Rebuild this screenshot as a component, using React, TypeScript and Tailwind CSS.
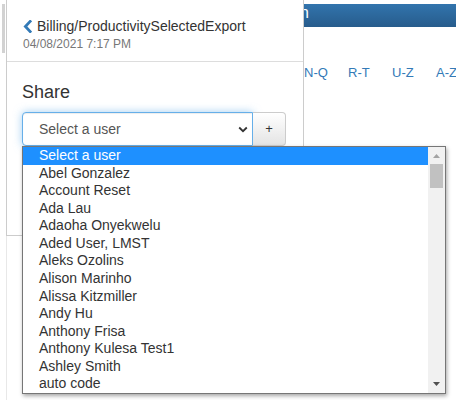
import React from "react";

const users = [
  "Select a user",
  "Abel Gonzalez",
  "Account Reset",
  "Ada Lau",
  "Adaoha Onyekwelu",
  "Aded User, LMST",
  "Aleks Ozolins",
  "Alison Marinho",
  "Alissa Kitzmiller",
  "Andy Hu",
  "Anthony Frisa",
  "Anthony Kulesa Test1",
  "Ashley Smith",
  "auto code",
];

const letters = ["A-C", "D-F", "G-I", "J-M", "N-Q", "R-T", "U-Z", "A-Z"];

export default function App() {
  return (
    <div className="relative w-[456px] h-[400px] overflow-hidden bg-white font-['Liberation_Sans',Arial,sans-serif]">
      {/* background page */}
      <div className="flex h-full">
        <div className="w-[3px] ml-[2px] mt-[4px] h-[49px] bg-[#d2d2d2] shrink-0" />
        <div className="ml-[1px] flex-1 border-l border-[#e8e8e8] h-full">
          <div className="mt-[4px] ml-[14px] h-[23px] bg-gradient-to-b from-[#3274ad] to-[#275c8c] text-white">
            <div className="w-[288px] text-right text-[16px] leading-[16px] pt-[1px] whitespace-nowrap overflow-hidden">
              Administration
            </div>
          </div>
          <div className="mt-[37px] ml-[121px] flex text-[13px] leading-[18px] text-[#337ab7]">
            {letters.map((l, i) => (
              <span key={i} className="w-[44px] shrink-0">
                {l}
              </span>
            ))}
          </div>
        </div>
      </div>

      {/* popover */}
      <div className="absolute left-[6px] top-[-1px] w-[298px] h-[237px] bg-white border border-[#cccccc]">
        <div className="pl-[16px] pt-[16px] pb-[8px] border-b border-[#dddddd]">
          <div className="flex items-center h-[20px] text-[14px] leading-[20px] text-[#333]">
            <svg width="9" height="13" viewBox="0 0 9 13" className="mr-[5px] shrink-0">
              <path d="M7.2 1.4 L2.4 6.5 L7.2 11.6" fill="none" stroke="#337ab7" strokeWidth="2.8" strokeLinecap="square" />
            </svg>
            <span>Billing/ProductivitySelectedExport</span>
          </div>
          <div className="text-[12px] leading-[17px] text-[#777]">04/08/2021 7:17 PM</div>
        </div>
        <div className="pl-[15px] pt-[20px]">
          <div className="text-[18px] leading-[20px] text-[#333]">Share</div>
          <div className="flex mt-[10px]">
            <div className="w-[231px] h-[34px] border border-[#66afe9] rounded-l-[4px] bg-white shadow-[inset_0_1px_1px_rgba(0,0,0,0.075),0_0_8px_rgba(102,175,233,0.6)] flex items-center justify-between pl-[16px] pr-[4px] text-[14px] text-[#555]">
              <span>Select a user</span>
              <svg width="10" height="7" viewBox="0 0 10 7">
                <path d="M1.2 1.5 L5 5.2 L8.8 1.5" fill="none" stroke="#333" strokeWidth="1.8" />
              </svg>
            </div>
            <div className="w-[33px] h-[34px] border border-l-0 border-[#cccccc] rounded-r-[4px] bg-gradient-to-b from-[#ffffff] to-[#e4e4e4] flex items-center justify-center text-[13px] text-[#333]">
              +
            </div>
          </div>
        </div>
      </div>

      {/* open dropdown list */}
      <div className="absolute left-[22px] top-[146px] w-[424px] flex border border-[#767676] bg-white shadow-[1px_2px_4px_rgba(0,0,0,0.35)]">
        <div className="flex-1">
          {users.map((u, i) => (
            <div
              key={i}
              className={
                i === 0
                  ? "h-[17.57px] leading-[17.57px] pl-[16px] text-[14px] bg-[#1e90ff] text-white whitespace-nowrap"
                  : "h-[17.57px] leading-[17.57px] pl-[16px] text-[14px] text-[#333] whitespace-nowrap"
              }
            >
              {u}
            </div>
          ))}
        </div>
        <div className="w-[17px] bg-[#f1f1f1] flex flex-col">
          <div className="h-[17px] flex items-center justify-center">
            <svg width="7" height="4" viewBox="0 0 7 4">
              <path d="M0 4 L3.5 0 L7 4 Z" fill="#a3a3a3" />
            </svg>
          </div>
          <div className="mx-[2px] h-[24px] bg-[#c1c1c1]" />
          <div className="flex-1" />
          <div className="h-[17px] flex items-center justify-center">
            <svg width="7" height="4" viewBox="0 0 7 4">
              <path d="M0 0 L3.5 4 L7 0 Z" fill="#505050" />
            </svg>
          </div>
        </div>
      </div>
    </div>
  );
}
